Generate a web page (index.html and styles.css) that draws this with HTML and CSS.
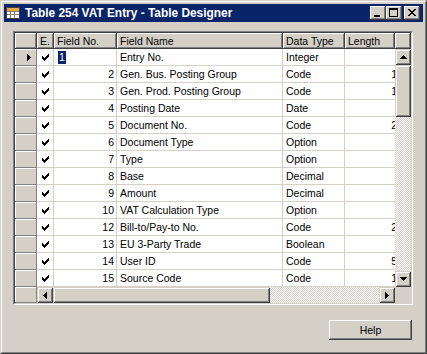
FILE: index.html
```html
<!DOCTYPE html>
<html>
<head>
<meta charset="utf-8">
<title>Table 254 VAT Entry - Table Designer</title>
<link rel="stylesheet" href="styles.css">
</head>
<body>
<div class="window">
  <div class="frame">
    <div class="titlebar">
      <svg class="appicon" width="16" height="16" viewBox="0 0 16 16" shape-rendering="crispEdges">
        <rect x="1.5" y="2.5" width="13" height="11" fill="#fff" stroke="#404040"/>
        <rect x="2" y="3" width="12" height="3" fill="#E8A848"/>
        <path d="M2 6.5h12M2 9.5h12M5.5 6v7M9.5 6v7" stroke="#808080" fill="none"/>
      </svg>
      <span class="title">Table 254 VAT Entry - Table Designer</span>
      <div class="tbtns">
        <span class="tbtn"><svg width="16" height="14" viewBox="0 0 16 14" shape-rendering="crispEdges"><path d="M4 9h6v2H4z"/></svg></span>
        <span class="tbtn"><svg width="16" height="14" viewBox="0 0 16 14" shape-rendering="crispEdges"><path d="M3 2h9v9H3zM4 4v6h7V4z" fill-rule="evenodd"/></svg></span>
        <span class="tbtn close"><svg width="16" height="14" viewBox="0 0 16 14" shape-rendering="crispEdges"><path d="M4 3h2v1h1v1h2V4h1V3h2v1h-1v1h-1v1H9v1h1v1h1v1h1v1h-2V9H9V8H7v1H6v1H4V9h1V8h1V7h1V6H6V5H5V4H4z"/></svg></span>
      </div>
    </div>
    <div class="client">
      <div class="gridframe">
        <div class="grid">
          <div class="hd"></div>
          <div class="hd">E.</div>
          <div class="hd">Field No.</div>
          <div class="hd">Field Name</div>
          <div class="hd">Data Type</div>
          <div class="hd">Length</div>
          <div class="hd"></div>

          <div class="vscroll">
            <div class="sbtn"><svg width="7" height="4" viewBox="0 0 7 4" shape-rendering="crispEdges"><path d="M3 0h1v1h1v1h1v1h1v1H0V3h1V2h1V1h1z"/></svg></div>
            <div class="vthumb"></div>
            <div class="track"></div>
            <div class="sbtn"><svg width="7" height="4" viewBox="0 0 7 4" shape-rendering="crispEdges"><path d="M0 0h7v1H6v1H5v1H4v1H3V3H2V2H1V1H0z"/></svg></div>
          </div>

          <div class="hscroll">
            <div class="sbtn"><svg width="4" height="7" viewBox="0 0 4 7" shape-rendering="crispEdges"><path d="M3 0h1v7H3V6H2V5H1V4H0V3h1V2h1V1h1z"/></svg></div>
            <div class="hthumb"></div>
            <div class="track"></div>
            <div class="sbtn"><svg width="4" height="7" viewBox="0 0 4 7" shape-rendering="crispEdges"><path d="M0 0h1v1h1v1h1v1h1v1H3v1H2v1H1v1H0z"/></svg></div>
          </div>

          <div class="rs"><svg width="4" height="7" viewBox="0 0 4 7" shape-rendering="crispEdges"><path d="M0 0h1v1h1v1h1v1h1v1H3v1H2v1H1v1H0z"/></svg></div>
          <div class="c ck"><svg width="7" height="7" viewBox="0 0 7 7" shape-rendering="crispEdges"><path d="M6 0h1v1H6zM5 1h2v1H5zM0 2h1v1H0zM4 2h3v1H4zM0 3h2v1H0zM3 3h3v1H3zM0 4h5v1H0zM1 5h3v1H1zM2 6h1v1H2z"/></svg></div>
          <div class="c edit"><span class="selnum">1</span></div>
          <div class="c">Entry No.</div>
          <div class="c">Integer</div>
          <div class="c len"></div>

          <div class="rs"></div>
          <div class="c ck"><svg width="7" height="7" viewBox="0 0 7 7" shape-rendering="crispEdges"><path d="M6 0h1v1H6zM5 1h2v1H5zM0 2h1v1H0zM4 2h3v1H4zM0 3h2v1H0zM3 3h3v1H3zM0 4h5v1H0zM1 5h3v1H1zM2 6h1v1H2z"/></svg></div>
          <div class="c num">2</div>
          <div class="c">Gen. Bus. Posting Group</div>
          <div class="c">Code</div>
          <div class="c len"><span>10</span></div>

          <div class="rs"></div>
          <div class="c ck"><svg width="7" height="7" viewBox="0 0 7 7" shape-rendering="crispEdges"><path d="M6 0h1v1H6zM5 1h2v1H5zM0 2h1v1H0zM4 2h3v1H4zM0 3h2v1H0zM3 3h3v1H3zM0 4h5v1H0zM1 5h3v1H1zM2 6h1v1H2z"/></svg></div>
          <div class="c num">3</div>
          <div class="c">Gen. Prod. Posting Group</div>
          <div class="c">Code</div>
          <div class="c len"><span>10</span></div>

          <div class="rs"></div>
          <div class="c ck"><svg width="7" height="7" viewBox="0 0 7 7" shape-rendering="crispEdges"><path d="M6 0h1v1H6zM5 1h2v1H5zM0 2h1v1H0zM4 2h3v1H4zM0 3h2v1H0zM3 3h3v1H3zM0 4h5v1H0zM1 5h3v1H1zM2 6h1v1H2z"/></svg></div>
          <div class="c num">4</div>
          <div class="c">Posting Date</div>
          <div class="c">Date</div>
          <div class="c len"></div>

          <div class="rs"></div>
          <div class="c ck"><svg width="7" height="7" viewBox="0 0 7 7" shape-rendering="crispEdges"><path d="M6 0h1v1H6zM5 1h2v1H5zM0 2h1v1H0zM4 2h3v1H4zM0 3h2v1H0zM3 3h3v1H3zM0 4h5v1H0zM1 5h3v1H1zM2 6h1v1H2z"/></svg></div>
          <div class="c num">5</div>
          <div class="c">Document No.</div>
          <div class="c">Code</div>
          <div class="c len"><span>20</span></div>

          <div class="rs"></div>
          <div class="c ck"><svg width="7" height="7" viewBox="0 0 7 7" shape-rendering="crispEdges"><path d="M6 0h1v1H6zM5 1h2v1H5zM0 2h1v1H0zM4 2h3v1H4zM0 3h2v1H0zM3 3h3v1H3zM0 4h5v1H0zM1 5h3v1H1zM2 6h1v1H2z"/></svg></div>
          <div class="c num">6</div>
          <div class="c">Document Type</div>
          <div class="c">Option</div>
          <div class="c len"></div>

          <div class="rs"></div>
          <div class="c ck"><svg width="7" height="7" viewBox="0 0 7 7" shape-rendering="crispEdges"><path d="M6 0h1v1H6zM5 1h2v1H5zM0 2h1v1H0zM4 2h3v1H4zM0 3h2v1H0zM3 3h3v1H3zM0 4h5v1H0zM1 5h3v1H1zM2 6h1v1H2z"/></svg></div>
          <div class="c num">7</div>
          <div class="c">Type</div>
          <div class="c">Option</div>
          <div class="c len"></div>

          <div class="rs"></div>
          <div class="c ck"><svg width="7" height="7" viewBox="0 0 7 7" shape-rendering="crispEdges"><path d="M6 0h1v1H6zM5 1h2v1H5zM0 2h1v1H0zM4 2h3v1H4zM0 3h2v1H0zM3 3h3v1H3zM0 4h5v1H0zM1 5h3v1H1zM2 6h1v1H2z"/></svg></div>
          <div class="c num">8</div>
          <div class="c">Base</div>
          <div class="c">Decimal</div>
          <div class="c len"></div>

          <div class="rs"></div>
          <div class="c ck"><svg width="7" height="7" viewBox="0 0 7 7" shape-rendering="crispEdges"><path d="M6 0h1v1H6zM5 1h2v1H5zM0 2h1v1H0zM4 2h3v1H4zM0 3h2v1H0zM3 3h3v1H3zM0 4h5v1H0zM1 5h3v1H1zM2 6h1v1H2z"/></svg></div>
          <div class="c num">9</div>
          <div class="c">Amount</div>
          <div class="c">Decimal</div>
          <div class="c len"></div>

          <div class="rs"></div>
          <div class="c ck"><svg width="7" height="7" viewBox="0 0 7 7" shape-rendering="crispEdges"><path d="M6 0h1v1H6zM5 1h2v1H5zM0 2h1v1H0zM4 2h3v1H4zM0 3h2v1H0zM3 3h3v1H3zM0 4h5v1H0zM1 5h3v1H1zM2 6h1v1H2z"/></svg></div>
          <div class="c num">10</div>
          <div class="c">VAT Calculation Type</div>
          <div class="c">Option</div>
          <div class="c len"></div>

          <div class="rs"></div>
          <div class="c ck"><svg width="7" height="7" viewBox="0 0 7 7" shape-rendering="crispEdges"><path d="M6 0h1v1H6zM5 1h2v1H5zM0 2h1v1H0zM4 2h3v1H4zM0 3h2v1H0zM3 3h3v1H3zM0 4h5v1H0zM1 5h3v1H1zM2 6h1v1H2z"/></svg></div>
          <div class="c num">12</div>
          <div class="c">Bill-to/Pay-to No.</div>
          <div class="c">Code</div>
          <div class="c len"><span>20</span></div>

          <div class="rs"></div>
          <div class="c ck"><svg width="7" height="7" viewBox="0 0 7 7" shape-rendering="crispEdges"><path d="M6 0h1v1H6zM5 1h2v1H5zM0 2h1v1H0zM4 2h3v1H4zM0 3h2v1H0zM3 3h3v1H3zM0 4h5v1H0zM1 5h3v1H1zM2 6h1v1H2z"/></svg></div>
          <div class="c num">13</div>
          <div class="c">EU 3-Party Trade</div>
          <div class="c">Boolean</div>
          <div class="c len"></div>

          <div class="rs"></div>
          <div class="c ck"><svg width="7" height="7" viewBox="0 0 7 7" shape-rendering="crispEdges"><path d="M6 0h1v1H6zM5 1h2v1H5zM0 2h1v1H0zM4 2h3v1H4zM0 3h2v1H0zM3 3h3v1H3zM0 4h5v1H0zM1 5h3v1H1zM2 6h1v1H2z"/></svg></div>
          <div class="c num">14</div>
          <div class="c">User ID</div>
          <div class="c">Code</div>
          <div class="c len"><span>50</span></div>

          <div class="rs"></div>
          <div class="c ck"><svg width="7" height="7" viewBox="0 0 7 7" shape-rendering="crispEdges"><path d="M6 0h1v1H6zM5 1h2v1H5zM0 2h1v1H0zM4 2h3v1H4zM0 3h2v1H0zM3 3h3v1H3zM0 4h5v1H0zM1 5h3v1H1zM2 6h1v1H2z"/></svg></div>
          <div class="c num">15</div>
          <div class="c">Source Code</div>
          <div class="c">Code</div>
          <div class="c len"><span>10</span></div>

          <div class="rs"></div>
          <div class="corner"></div>
        </div>
      </div>
      <div class="actions">
        <button class="btn" type="button">Help</button>
      </div>
    </div>
  </div>
</div>
</body>
</html>
```
FILE: styles.css
```css
* { box-sizing: border-box; }
html, body { margin: 0; padding: 0; }
body {
  background: #D4D0C8;
  font-family: "Liberation Sans", Arial, sans-serif;
  font-size: 10.5px;
  color: #000;
}
.window {
  width: 427px;
  height: 354px;
  background: #D4D0C8;
  border: 1px solid;
  border-color: #D4D0C8 #404040 #404040 #D4D0C8;
  display: flex;
  flex-direction: column;
}
.frame {
  flex: 1;
  border: 1px solid;
  border-color: #fff #808080 #808080 #fff;
  padding: 2px;
  display: flex;
  flex-direction: column;
}
.titlebar {
  height: 18px;
  background: #0A246A;
  display: flex;
  align-items: center;
  padding: 0 3px 0 1px;
  color: #fff;
}
.appicon { display: block; flex: none; }
.title {
  margin-left: 4px;
  font-weight: bold;
  font-size: 11.9px;
  white-space: nowrap;
  flex: 1;
}
.tbtns { display: flex; align-items: center; }
.tbtn {
  width: 16px;
  height: 14px;
  background: #D4D0C8;
  box-shadow: inset -1px -1px #404040, inset 1px 1px #fff, inset -2px -2px #808080;
  display: block;
}
.tbtn svg { display: block; fill: #000; }
.tbtn.close { margin-left: 2px; }

.client {
  flex: 1;
  padding: 9px 10px 0 9px;
  display: flex;
  flex-direction: column;
}
.gridframe {
  width: 400px;
  border: 1px solid;
  border-color: #808080 #fff #fff #808080;
}
.grid {
  border: 1px solid;
  border-color: #404040 #D4D0C8 #D4D0C8 #404040;
  background: #fff;
  display: grid;
  grid-template-columns: 22px 17px 63px 166px 62px 50px 16px;
  grid-template-rows: 16px repeat(14, 17px) 16px;
}
.hd {
  background: #D4D0C8;
  box-shadow: inset -1px -1px #404040, inset 1px 1px #fff, inset -2px -2px #808080;
  padding: 0 3px;
  display: flex;
  align-items: center;
  white-space: nowrap;
  overflow: hidden;
}
.rs {
  background: #D4D0C8;
  box-shadow: inset -1px -1px #808080, inset 1px 1px #fff;
  display: flex;
  align-items: center;
  justify-content: flex-end;
  padding-right: 6px;
}
.rs svg { display: block; fill: #000; }
.c {
  border-right: 1px solid #D4D0C8;
  border-bottom: 1px solid #D4D0C8;
  padding: 0 3px;
  display: flex;
  align-items: center;
  white-space: nowrap;
  overflow: hidden;
}
.ck { justify-content: center; padding: 0 0 0 1px; }
.ck svg { display: block; fill: #000; }
.num { justify-content: flex-end; padding-right: 2px; }
.edit { padding-left: 4px; }
.selnum {
  background: #0A246A;
  color: #fff;
  line-height: 13px;
  padding: 0 1px;
}
.len {
  justify-content: flex-end;
  padding-right: 0;
  border-right: 0;
}
.len span { margin-right: -8px; }

.vscroll {
  grid-column: 7;
  grid-row: 2 / span 14;
  display: flex;
  flex-direction: column;
}
.hscroll {
  grid-column: 2 / span 5;
  grid-row: 16;
  display: flex;
}
.sbtn {
  flex: none;
  width: 16px;
  height: 16px;
  background: #D4D0C8;
  box-shadow: inset 1px 1px #D4D0C8, inset -1px -1px #404040, inset 2px 2px #fff, inset -2px -2px #808080;
  display: flex;
  align-items: center;
  justify-content: center;
}
.sbtn svg { display: block; fill: #000; }
.vthumb, .hthumb {
  flex: none;
  background: #D4D0C8;
  box-shadow: inset 1px 1px #D4D0C8, inset -1px -1px #404040, inset 2px 2px #fff, inset -2px -2px #808080;
}
.vthumb { height: 52px; }
.hthumb { width: 217px; }
.track {
  flex: 1;
  background: repeating-conic-gradient(#D4D0C8 0 25%, #fff 0 50%) 0 0 / 2px 2px;
}
.corner { background: #D4D0C8; }

.actions {
  display: flex;
  justify-content: flex-end;
  margin-top: 15px;
  padding-right: 1px;
}
.btn {
  width: 83px;
  height: 20px;
  margin: 0;
  border: 0;
  padding: 0;
  background: #D4D0C8;
  box-shadow: inset -1px -1px #404040, inset 1px 1px #fff, inset -2px -2px #808080;
  font-family: "Liberation Sans", Arial, sans-serif;
  font-size: 10.5px;
  color: #000;
}
```
